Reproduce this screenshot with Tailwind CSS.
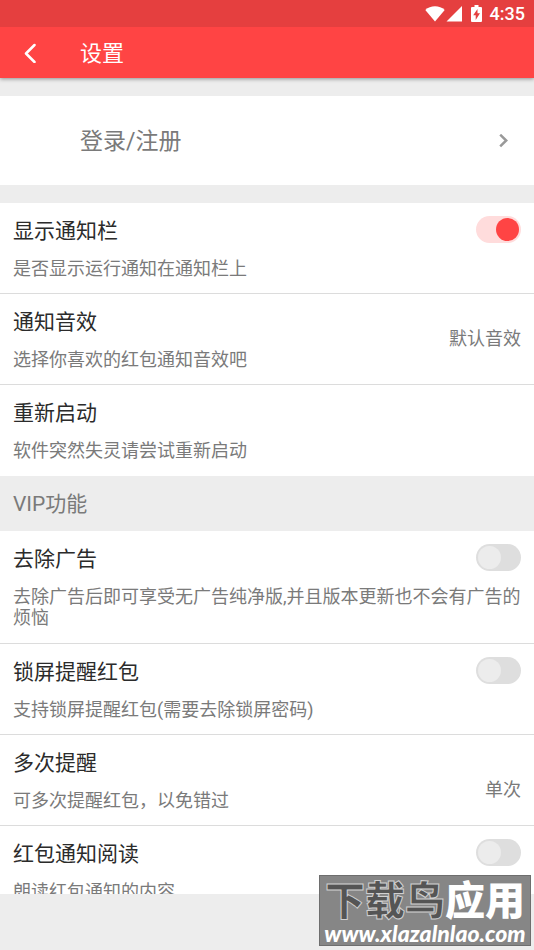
<!DOCTYPE html>
<html lang="zh-CN">
<head>
<meta charset="utf-8">
<meta name="viewport" content="width=device-width, initial-scale=1">
<title>设置</title>
<script src="https://cdn.jsdelivr.net/npm/@tailwindcss/browser@4"></script>
</head>
<body class="relative flex h-screen flex-col overflow-hidden bg-[#ededed] font-['Roboto','Noto_Sans_CJK_SC',sans-serif] text-[#7a7a7a]">
  <!-- Status bar -->
  <div class="relative z-20 flex h-[27px] shrink-0 items-center justify-end bg-[#e53f3f] pr-[9px] text-white">
    <svg class="h-4 w-5" viewBox="0 0 20 16" fill="currentColor" aria-hidden="true"><path d="M10 15.500L.3 4C3 1.600 6.300.3 10 .3S17 1.600 19.700 4z"/></svg>
    <svg class="ml-px h-4 w-4" viewBox="0 0 16 16" fill="currentColor" aria-hidden="true"><path d="M16 0v15.500H.5z"/></svg>
    <svg class="ml-[9px] h-[17px] w-[11px]" viewBox="0 0 11 17" aria-hidden="true"><path fill="currentColor" d="M3.500 0h4v2H10q1 0 1 1v13q0 1-1 1H1q-1 0-1-1V3q0-1 1-1h2.500z"/><path fill="#e53f3f" d="M6.500 4v4.300H9L4.700 15v-4.800H2.200z"/></svg>
    <span class="ml-2 text-[18px] leading-[27px] font-medium">4:35</span>
  </div>

  <!-- App bar -->
  <header class="relative z-10 flex h-[51px] shrink-0 items-center bg-[#ff4444] text-white shadow-[0_1px_4px_rgba(0,0,0,0.4)]">
    <button type="button" aria-label="返回" class="flex h-full w-20 items-center pl-6">
      <svg class="h-5 w-3" viewBox="0 0 12 20" fill="none" stroke="currentColor" stroke-width="2.500" stroke-linecap="round" stroke-linejoin="round" aria-hidden="true"><path d="M10.500 2L2 10.500l8.500 8.500"/></svg>
    </button>
    <h1 class="pt-[2px] text-[22px] leading-8">设置</h1>
  </header>

  <main class="flex-1 overflow-hidden">
    <a href="#login" class="mt-[18px] flex h-[89px] items-center justify-between bg-white pr-[26px] pl-20 text-[23px]">
      <span class="pt-1">登录/注册</span>
      <svg class="h-[14px] w-[9px]" viewBox="0 0 9 14" fill="none" stroke="#999" stroke-width="2.500" aria-hidden="true"><path d="M1.200.7L7.200 6.500l-6 5.800"/></svg>
    </a>

    <section class="mt-[18px] bg-white">
      <div class="relative border-b border-[#dcdcdc] pt-[13px] pr-[13px] pb-[14px] pl-[13px]">
        <label for="bar" class="block text-[21px] leading-[30px] text-[#2b2b2b]">显示通知栏</label>
        <p class="mt-3 text-[18px] leading-[21px]">是否显示运行通知在通知栏上</p>
        <input id="bar" type="checkbox" role="switch" checked class="absolute top-[13px] right-[13px] h-[27px] w-[45px] appearance-none rounded-full bg-[#dedede] before:absolute before:top-[2px] before:left-[2px] before:size-[23px] before:rounded-full before:bg-[#ececec] checked:bg-[#ffdcdc] checked:before:left-5 checked:before:bg-[#ff4444]">
      </div>
      <button type="button" class="flex w-full items-center justify-between border-b border-[#dcdcdc] pt-[13px] pr-[13px] pb-[14px] pl-[13px] text-left">
        <span>
          <span class="block text-[21px] leading-[30px] text-[#2b2b2b]">通知音效</span>
          <span class="mt-3 block text-[18px] leading-[21px]">选择你喜欢的红包通知音效吧</span>
        </span>
        <span class="text-[18px] leading-[21px]">默认音效</span>
      </button>
      <button type="button" class="block w-full pt-[13px] pr-[13px] pb-[15px] pl-[13px] text-left">
        <span class="block text-[21px] leading-[30px] text-[#2b2b2b]">重新启动</span>
        <span class="mt-3 block text-[18px] leading-[21px]">软件突然失灵请尝试重新启动</span>
      </button>
    </section>

    <h2 class="flex h-[55px] items-center pt-[2px] pl-[13px] text-[21px]">VIP功能</h2>

    <section class="bg-white">
      <div class="relative border-b border-[#dcdcdc] pt-[13px] pr-[10px] pb-[15px] pl-[13px]">
        <label for="ads" class="block text-[21px] leading-[30px] text-[#2b2b2b]">去除广告</label>
        <p class="mt-3 text-[18px] leading-[21px]">去除广告后即可享受无广告纯净版,并且版本更新也不会有广告的烦恼</p>
        <input id="ads" type="checkbox" role="switch" class="absolute top-[13px] right-[13px] h-[27px] w-[45px] appearance-none rounded-full bg-[#dedede] before:absolute before:top-[2px] before:left-[2px] before:size-[23px] before:rounded-full before:bg-[#ececec] checked:bg-[#ffdcdc] checked:before:left-5 checked:before:bg-[#ff4444]">
      </div>
      <div class="relative border-b border-[#dcdcdc] pt-[13px] pr-[13px] pb-[14px] pl-[13px]">
        <label for="lock" class="block text-[21px] leading-[30px] text-[#2b2b2b]">锁屏提醒红包</label>
        <p class="mt-3 text-[18px] leading-[21px]">支持锁屏提醒红包(需要去除锁屏密码)</p>
        <input id="lock" type="checkbox" role="switch" class="absolute top-[13px] right-[13px] h-[27px] w-[45px] appearance-none rounded-full bg-[#dedede] before:absolute before:top-[2px] before:left-[2px] before:size-[23px] before:rounded-full before:bg-[#ececec] checked:bg-[#ffdcdc] checked:before:left-5 checked:before:bg-[#ff4444]">
      </div>
      <button type="button" class="flex w-full items-end justify-between border-b border-[#dcdcdc] pt-[13px] pr-[13px] pb-[14px] pl-[13px] text-left">
        <span>
          <span class="block text-[21px] leading-[30px] text-[#2b2b2b]">多次提醒</span>
          <span class="mt-3 block text-[18px] leading-[21px]">可多次提醒红包，以免错过</span>
        </span>
        <span class="pb-[11px] text-[18px] leading-[21px]">单次</span>
      </button>
      <div class="relative pt-[13px] pr-[13px] pb-[14px] pl-[13px]">
        <label for="read" class="block text-[21px] leading-[30px] text-[#2b2b2b]">红包通知阅读</label>
        <p class="mt-3 text-[18px] leading-[21px]">朗读红包通知的内容</p>
        <input id="read" type="checkbox" role="switch" class="absolute top-[13px] right-[13px] h-[27px] w-[45px] appearance-none rounded-full bg-[#dedede] before:absolute before:top-[2px] before:left-[2px] before:size-[23px] before:rounded-full before:bg-[#ececec] checked:bg-[#ffdcdc] checked:before:left-5 checked:before:bg-[#ff4444]">
      </div>
    </section>
  </main>

  <footer class="h-14 shrink-0"></footer>

  <!-- Site badge over the page corner -->
  <div class="absolute right-[3px] bottom-1 flex h-[71px] w-[212px] flex-col items-center border border-[#6e6e6e] bg-[#868686] pt-[6px] whitespace-nowrap text-white">
    <div class="text-[40px] leading-[40px] font-black"><span class="text-[#555] [-webkit-text-stroke:1px_#d0d0d0]">下载鸟</span>应用</div>
    <div class="font-['Lato',sans-serif] text-[23px] leading-[22px] font-black italic">www.xlazalnlao.com</div>
  </div>
</body>
</html>
